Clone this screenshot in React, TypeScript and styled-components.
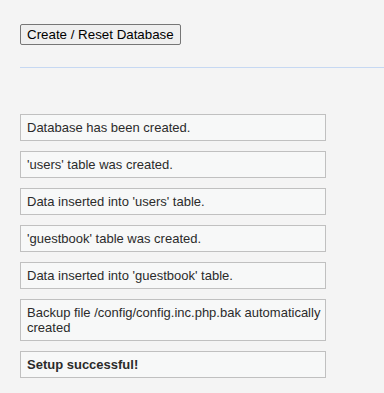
import React from 'react'
import styled, { createGlobalStyle } from 'styled-components'

const GlobalStyle = createGlobalStyle`
  html, body {
    margin: 0;
    padding: 0;
    background: #f4f4f4;
  }
  body {
    font-family: "Liberation Sans", Arial, sans-serif;
  }
`

const Page = styled.div`
  padding: 24px 0 0 20px;
  min-height: 393px;
  box-sizing: border-box;
`

const ResetButton = styled.button`
  font-family: "Liberation Sans", Arial, sans-serif;
  font-size: 13.33px;
  color: #000;
  background: #efefef;
  border: 1px solid #767676;
  border-radius: 2px;
  height: 21px;
  padding: 1px 6px;
  line-height: 15px;
  cursor: pointer;
`

const Rule = styled.div`
  margin-top: 22px;
  border-top: 1px solid #c6d8f2;
`

const MessageList = styled.div`
  margin-top: 46px;
  display: flex;
  flex-direction: column;
  gap: 10px;
  width: 306px;
`

const Message = styled.div<{ $strong?: boolean }>`
  box-sizing: border-box;
  border: 1px solid #c0c0c0;
  background: #f7f8f8;
  padding: 5px 3px 5px 6px;
  font-size: 13px;
  line-height: 15px;
  color: #2b2b2b;
  font-weight: ${p => (p.$strong ? 'bold' : 'normal')};
`

const messages = [
  'Database has been created.',
  "'users' table was created.",
  "Data inserted into 'users' table.",
  "'guestbook' table was created.",
  "Data inserted into 'guestbook' table.",
  'Backup file /config/config.inc.php.bak automatically created',
]

const App: React.FC = () => {
  return (
    <>
      <GlobalStyle />
      <Page>
        <ResetButton type='button'>Create / Reset Database</ResetButton>
        <Rule />
        <MessageList>
          {messages.map(text => (
            <Message key={text}>{text}</Message>
          ))}
          <Message $strong>Setup successful!</Message>
        </MessageList>
      </Page>
    </>
  )
}

export default App
